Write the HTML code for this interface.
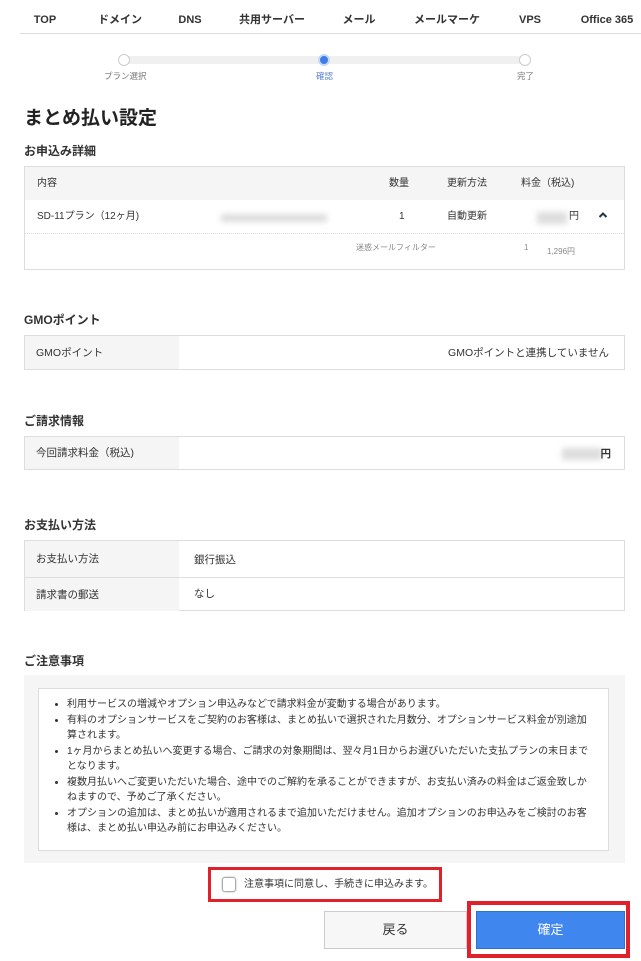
<!DOCTYPE html>
<html><head><meta charset="utf-8"><style>
*{margin:0;padding:0;box-sizing:border-box}
body{width:641px;height:961px;position:relative;background:#fff;font-family:"Liberation Sans","Noto Sans CJK JP",sans-serif;color:#333;font-size:11px;overflow:hidden;line-height:14px}
.a{position:absolute;line-height:14px}
.nav{font-weight:bold;font-size:11px;top:13px;height:14px;transform:translateX(-50%);white-space:nowrap;color:#333}
.h{font-weight:bold;font-size:12px;left:24px}
.box{left:24px;width:601px;border:1px solid #ddd}
.lab{background:#f5f5f5;position:absolute;left:0;top:0;bottom:0;width:154px;padding-left:11px;display:flex;align-items:center;font-size:10.5px}
.blur{background:#ddd;filter:blur(3px);height:8px}
.note li{margin-left:14px;line-height:15px;font-size:10px;margin-bottom:1px}
</style></head><body>
<div class="a nav" style="left:45px">TOP</div>
<div class="a nav" style="left:120px">ドメイン</div>
<div class="a nav" style="left:190px">DNS</div>
<div class="a nav" style="left:272px">共用サーバー</div>
<div class="a nav" style="left:359px">メール</div>
<div class="a nav" style="left:447px">メールマーケ</div>
<div class="a nav" style="left:530px">VPS</div>
<div class="a nav" style="left:607px">Office 365</div>
<div class="a" style="left:20px;top:33px;width:621px;height:1px;background:#ddd"></div>

<div class="a" style="left:124px;top:56px;width:401px;height:8px;background:#f0f0f0"></div>
<div class="a" style="left:118px;top:54px;width:12px;height:12px;border-radius:50%;border:1px solid #ccc;background:#fff"></div>
<div class="a" style="left:318px;top:54px;width:12px;height:12px;border-radius:50%;border:2px solid #c8d8f5;background:#3b7de8"></div>
<div class="a" style="left:519px;top:54px;width:12px;height:12px;border-radius:50%;border:1px solid #ccc;background:#fff"></div>
<div class="a" style="left:104px;top:69px;font-size:8.5px;color:#777">プラン選択</div>
<div class="a" style="left:316px;top:69px;font-size:8.5px;color:#5580d0">確認</div>
<div class="a" style="left:517px;top:69px;font-size:8.5px;color:#777">完了</div>

<div class="a" style="left:24px;top:108px;font-size:19px;font-weight:bold;color:#222;line-height:22px">まとめ払い設定</div>
<div class="a h" style="top:144px">お申込み詳細</div>
<div class="a box" style="top:166px;height:104px">
 <div class="a" style="left:0;top:0;width:599px;height:33px;background:#f5f5f5"></div>
 <div class="a" style="left:12px;top:10px;font-size:10px">内容</div>
 <div class="a" style="left:364px;top:10px;font-size:10px">数量</div>
 <div class="a" style="left:422px;top:10px;font-size:10px">更新方法</div>
 <div class="a" style="left:496px;top:10px;font-size:10px">料金（税込)</div>
 <div class="a" style="left:12px;top:43px;font-size:10px">SD-11プラン（12ヶ月)</div>
 <div class="a blur" style="left:196px;top:47px;width:106px"></div>
 <div class="a" style="left:374px;top:43px;font-size:10px">1</div>
 <div class="a" style="left:422px;top:43px;font-size:10px">自動更新</div>
 <div class="a blur" style="left:512px;top:45px;width:30px;height:12px"></div>
 <div class="a" style="left:544px;top:43px;font-size:10px">円</div>
 <svg class="a" style="left:573px;top:44px" width="10" height="8" viewBox="0 0 10 8"><path d="M1.5 6L5 2.5 8.5 6" fill="none" stroke="#234" stroke-width="2"/></svg>
 <div class="a" style="left:0;top:66px;width:599px;border-top:1px dotted #ddd"></div>
 <div class="a" style="left:331px;top:74px;font-size:8px;color:#888">迷惑メールフィルター</div>
 <div class="a" style="left:499px;top:74px;font-size:8px;color:#888">1</div>
 <div class="a" style="left:522px;top:78px;font-size:8px;color:#888">1,296円</div>
</div>

<div class="a h" style="top:313px">GMOポイント</div>
<div class="a box" style="top:335px;height:35px"><div class="lab">GMOポイント</div>
 <div class="a" style="right:15px;top:10px;font-size:10.5px">GMOポイントと連携していません</div></div>

<div class="a h" style="top:414px">ご請求情報</div>
<div class="a box" style="top:436px;height:34px"><div class="lab">今回請求料金（税込)</div>
 <div class="a blur" style="right:22px;top:11px;width:40px;height:12px"></div>
 <div class="a" style="right:13px;top:10px;font-size:10.5px;font-weight:bold">円</div></div>

<div class="a h" style="top:518px">お支払い方法</div>
<div class="a box" style="top:540px;height:71px">
 <div class="lab" style="height:36px;bottom:auto">お支払い方法</div>
 <div class="lab" style="top:36px;height:34px;bottom:auto;border-top:1px solid #ddd">請求書の郵送</div>
 <div class="a" style="left:154px;top:36px;width:446px;border-top:1px solid #ddd"></div>
 <div class="a" style="left:169px;top:12px;font-size:10.5px">銀行振込</div>
 <div class="a" style="left:169px;top:46px;font-size:10.5px">なし</div>
</div>

<div class="a h" style="top:654px">ご注意事項</div>
<div class="a" style="left:24px;top:675px;width:601px;height:188px;background:#f5f5f5"></div>
<div class="a note" style="left:38px;top:688px;width:571px;height:163px;background:#fff;border:1px solid #ddd;padding:8px 14px 0 14px">
<ul>
<li>利用サービスの増減やオプション申込みなどで請求料金が変動する場合があります。</li>
<li>有料のオプションサービスをご契約のお客様は、まとめ払いで選択された月数分、オプションサービス料金が別途加算されます。</li>
<li>1ヶ月からまとめ払いへ変更する場合、ご請求の対象期間は、翌々月1日からお選びいただいた支払プランの末日までとなります。</li>
<li>複数月払いへご変更いただいた場合、途中でのご解約を承ることができますが、お支払い済みの料金はご返金致しかねますので、予めご了承ください。</li>
<li>オプションの追加は、まとめ払いが適用されるまで追加いただけません。追加オプションのお申込みをご検討のお客様は、まとめ払い申込み前にお申込みください。</li>
</ul></div>

<div class="a" style="left:208px;top:867px;width:234px;height:35px;border:3px solid #e0202a"></div>
<div class="a" style="left:222px;top:877px;width:14px;height:15px;border:1px solid #aaa;border-radius:3px;background:#fff;box-shadow:0 0 2px #bbb"></div>
<div class="a" style="left:244px;top:878px;font-size:10px">注意事項に同意し、手続きに申込みます。</div>

<div class="a" style="left:324px;top:911px;width:143px;height:38px;border:1px solid #ccc;background:#f7f7f7;font-size:13px;display:flex;align-items:center;justify-content:center">戻る</div>
<div class="a" style="left:467px;top:901px;width:163px;height:57px;border:4px solid #e0202a"></div>
<div class="a" style="left:476px;top:911px;width:149px;height:38px;background:#3f86ee;border:1px solid #2f6fd0;color:#fff;font-size:13px;display:flex;align-items:center;justify-content:center">確定</div>
</body></html>
